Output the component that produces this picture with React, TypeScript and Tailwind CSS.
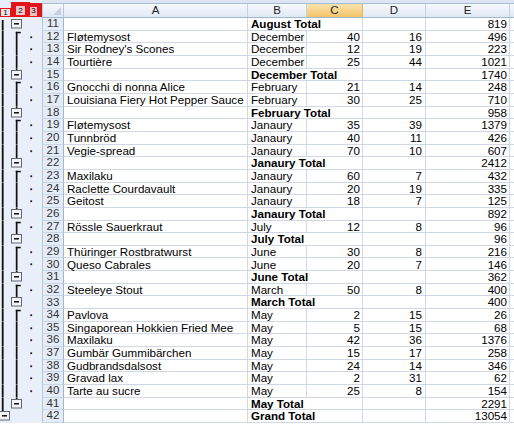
import React from "react";

type Row = {
    n: number;
    a?: string;
    b: string;
    c?: number;
    d?: number;
    e: number;
    kind: "total" | "detail" | "grand";
    first?: boolean;
};

const ROW_H = 12.67;
const COLS = "grid-cols-[42px_22px_184px_59px_56px_63px_84px_1fr]";

const detail = (n: number, a: string, b: string, c: number, d: number, e: number, first = false): Row => ({
    n, a, b, c, d, e, kind: "detail", first,
});
const total = (n: number, b: string, e: number): Row => ({ n, b, e, kind: "total" });

const rows: Row[] = [
    total(11, "August Total", 819),
    detail(12, "Fløtemysost", "December", 40, 16, 496, true),
    detail(13, "Sir Rodney's Scones", "December", 12, 19, 223),
    detail(14, "Tourtière", "December", 25, 44, 1021),
    total(15, "December Total", 1740),
    detail(16, "Gnocchi di nonna Alice", "February", 21, 14, 248, true),
    detail(17, "Louisiana Fiery Hot Pepper Sauce", "February", 30, 25, 710),
    total(18, "February Total", 958),
    detail(19, "Fløtemysost", "Janaury", 35, 39, 1379, true),
    detail(20, "Tunnbröd", "Janaury", 40, 11, 426),
    detail(21, "Vegie-spread", "Janaury", 70, 10, 607),
    total(22, "Janaury Total", 2412),
    detail(23, "Maxilaku", "Janaury", 60, 7, 432, true),
    detail(24, "Raclette Courdavault", "Janaury", 20, 19, 335),
    detail(25, "Geitost", "Janaury", 18, 7, 125),
    total(26, "Janaury Total", 892),
    detail(27, "Rössle Sauerkraut", "July", 12, 8, 96, true),
    total(28, "July Total", 96),
    detail(29, "Thüringer Rostbratwurst", "June", 30, 8, 216, true),
    detail(30, "Queso Cabrales", "June", 20, 7, 146),
    total(31, "June Total", 362),
    detail(32, "Steeleye Stout", "March", 50, 8, 400, true),
    total(33, "March Total", 400),
    detail(34, "Pavlova", "May", 2, 15, 26, true),
    detail(35, "Singaporean Hokkien Fried Mee", "May", 5, 15, 68),
    detail(36, "Maxilaku", "May", 42, 36, 1376),
    detail(37, "Gumbär Gummibärchen", "May", 15, 17, 258),
    detail(38, "Gudbrandsdalsost", "May", 24, 14, 346),
    detail(39, "Gravad lax", "May", 2, 31, 62),
    detail(40, "Tarte au sucre", "May", 25, 8, 154),
    total(41, "May Total", 2291),
    { n: 42, b: "Grand Total", e: 13054, kind: "grand" },
];

function MinusButton({ x }: { x: number }) {
    return (
        <>
            <rect x={x} y={1.5} width={10} height={8.5} fill="#f3f5f8" stroke="#5f6877" strokeWidth={1} />
            <rect x={x + 2.5} y={5.1} width={5} height={1.4} fill="#000" />
        </>
    );
}

// outline gutter: level 1 line, level 2 brackets, level 3 dots
function Outline({ row, index }: { row: Row; index: number }) {
    const h = ROW_H;
    return (
        <svg width={42} height={h} className="block">
            {row.kind !== "grand" && (
                <rect x={1.8} y={index === 0 ? 2 : 0} width={1.8} height={index === 0 ? h - 2 : h} fill="#111" />
            )}
            {row.kind === "grand" && (
                <>
                    <rect x={1.8} y={0} width={1.8} height={1.5} fill="#111" />
                    <MinusButton x={-0.5} />
                </>
            )}
            {row.kind === "detail" && (
                <>
                    <rect x={15.8} y={row.first ? 0.8 : 0} width={1.7} height={row.first ? h - 0.8 : h} fill="#111" />
                    {row.first && <rect x={15.8} y={0.8} width={5} height={1.5} fill="#111" />}
                    <rect x={30.3} y={h / 2 - 1} width={1.8} height={1.8} fill="#222" />
                </>
            )}
            {row.kind === "total" && (
                <>
                    {index > 0 && <rect x={15.8} y={0} width={1.7} height={1.5} fill="#111" />}
                    <MinusButton x={11.5} />
                </>
            )}
        </svg>
    );
}

function LevelButtons() {
    return (
        <div className="flex h-[18px] w-[42px] items-end bg-[#e9eff8] pb-[1px]">
            <div className="flex h-[9px] w-[11px] items-center justify-center border border-[#e5141c] bg-[#e6e6e6] text-[8px] leading-none text-black">
                1
            </div>
            <div className="flex h-[15px] w-[19px] items-center justify-center bg-[#e5141c] pt-[2px]">
                <span className="flex h-[9px] w-[9px] items-center justify-center bg-[#f2c6c8] text-[8px] leading-none text-black">
                    2
                </span>
            </div>
            <div className="flex h-[14px] w-[12px] items-center justify-start bg-[#e5141c] pt-[2px]">
                <span className="flex h-[9px] w-[7px] items-center justify-center bg-[#f0c0c2] text-[8px] leading-none text-black">
                    3
                </span>
            </div>
        </div>
    );
}

function HeaderCell({ label, active }: { label: string; active?: boolean }) {
    return (
        <div
            className={
                active
                    ? "flex items-center justify-center border-r border-[#e0b55c] bg-linear-to-b from-[#fbe3ad] to-[#f3c466] text-[11.5px] leading-none text-[#222]"
                    : "flex items-center justify-center border-r border-[#c5d2e3] bg-linear-to-b from-[#f6f9fd] to-[#e0e8f3] text-[11.5px] leading-none text-[#222]"
            }
        >
            {label}
        </div>
    );
}

export default function App() {
    return (
        <div className="h-[426px] w-[514px] overflow-hidden bg-white font-['Liberation_Sans',Arial,sans-serif] text-[11.6px] text-black">
            <div className="flex">
                <LevelButtons />
                <div className="flex flex-1 flex-col">
                    <div className="h-[4px] border-b border-[#a9bcd5] bg-[#dce5f1]" />
                    <div className="grid h-[14px] grid-cols-[22px_184px_59px_56px_63px_84px_1fr] border-b border-[#9eb6ce]">
                        <div className="border-r border-l border-[#b7c7dc] bg-linear-to-b from-[#f6f9fd] to-[#e0e8f3]">
                            <svg width={20} height={13} className="block">
                                <polygon points="18,3 18,11 10,11" fill="#c6d1e0" />
                            </svg>
                        </div>
                        <HeaderCell label="A" />
                        <HeaderCell label="B" />
                        <HeaderCell label="C" active />
                        <HeaderCell label="D" />
                        <HeaderCell label="E" />
                        <div className="bg-linear-to-b from-[#f6f9fd] to-[#e0e8f3]" />
                    </div>
                </div>
            </div>

            {rows.map((row, i) => {
                const bold = row.kind !== "detail";
                return (
                    <div key={row.n} className={`grid h-[12.67px] ${COLS} bg-white`}>
                        <div className="bg-[#e9eff8]">
                            <Outline row={row} index={i} />
                        </div>
                        <div className="flex items-center justify-center border-r border-b border-l border-r-[#9eb6ce] border-b-[#c9d6e6] border-l-[#b7c7dc] bg-[#e4ecf7] text-[11.5px] leading-none text-[#333]">
                            {row.n}
                        </div>
                        <div className="flex items-center whitespace-nowrap border-r border-b border-[#d0d7e5] px-[3px] leading-none">
                            {row.a}
                        </div>
                        <div
                            className={
                                bold
                                    ? "flex items-center overflow-visible whitespace-nowrap border-b border-[#d0d7e5] px-[3px] font-bold leading-none"
                                    : "flex items-center whitespace-nowrap border-r border-b border-[#d0d7e5] px-[3px] leading-none"
                            }
                        >
                            {row.b}
                        </div>
                        <div className="flex items-center justify-end border-r border-b border-[#d0d7e5] px-[2px] leading-none">
                            {row.c}
                        </div>
                        <div className="flex items-center justify-end border-r border-b border-[#d0d7e5] px-[3px] leading-none">
                            {row.d}
                        </div>
                        <div className="flex items-center justify-end border-r border-b border-[#d0d7e5] px-[2px] leading-none">
                            {row.e}
                        </div>
                        <div className="border-b border-[#d0d7e5]" />
                    </div>
                );
            })}
        </div>
    );
}
